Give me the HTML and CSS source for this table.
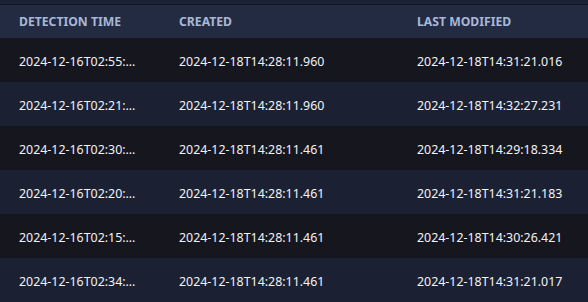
FILE: index.html
```html
<!DOCTYPE html>
<html>
<head>
<meta charset="utf-8">
<link rel="stylesheet" href="styles.css">
</head>
<body>
<div class="wrap">
<table class="grid">
<colgroup><col class="c1"><col class="c2"><col class="c3"></colgroup>
<thead>
<tr><th>Detection Time</th><th>Created</th><th>Last Modified</th></tr>
</thead>
<tbody>
<tr><td>2024-12-16T02:55:21.000</td><td>2024-12-18T14:28:11.960</td><td>2024-12-18T14:31:21.016</td></tr>
<tr><td>2024-12-16T02:21:40.000</td><td>2024-12-18T14:28:11.960</td><td>2024-12-18T14:32:27.231</td></tr>
<tr><td>2024-12-16T02:30:12.000</td><td>2024-12-18T14:28:11.461</td><td>2024-12-18T14:29:18.334</td></tr>
<tr><td>2024-12-16T02:20:33.000</td><td>2024-12-18T14:28:11.461</td><td>2024-12-18T14:31:21.183</td></tr>
<tr><td>2024-12-16T02:15:07.000</td><td>2024-12-18T14:28:11.461</td><td>2024-12-18T14:30:26.421</td></tr>
<tr><td>2024-12-16T02:34:50.000</td><td>2024-12-18T14:28:11.461</td><td>2024-12-18T14:31:21.017</td></tr>
</tbody>
</table>
</div>
</body>
</html>
```
FILE: styles.css
```css
html, body {
  margin: 0;
  padding: 0;
  background: #1b2132;
  font-family: "Noto Sans", "Open Sans", sans-serif;
}
.wrap {
  padding-top: 4px;
  background: #1b2134;
  overflow: hidden;
  height: 298px;
}
.grid {
  width: 588px;
  border-collapse: collapse;
  table-layout: fixed;
  border-top: 1px solid #121725;
}
.c1 { width: 160px; }
.c2 { width: 238px; }
.c3 { width: 190px; }
th {
  height: 33px;
  padding: 0 19px;
  text-align: left;
  background: #222b42;
  color: #a9b7d6;
  font-size: 12.2px;
  font-weight: 700;
  text-transform: uppercase;
  white-space: nowrap;
}
td {
  height: 44px;
  padding: 3px 19px 0 19px;
  box-sizing: border-box;
  color: #f2f3f6;
  font-size: 12.4px;
  white-space: nowrap;
  overflow: hidden;
  text-overflow: ellipsis;
}
td:first-child { padding-right: 18px; }
td:last-child { padding-right: 4px; }
tbody tr:nth-child(odd) td { background: #16161f; }
tbody tr:nth-child(even) td { background: #1b2132; }
```
